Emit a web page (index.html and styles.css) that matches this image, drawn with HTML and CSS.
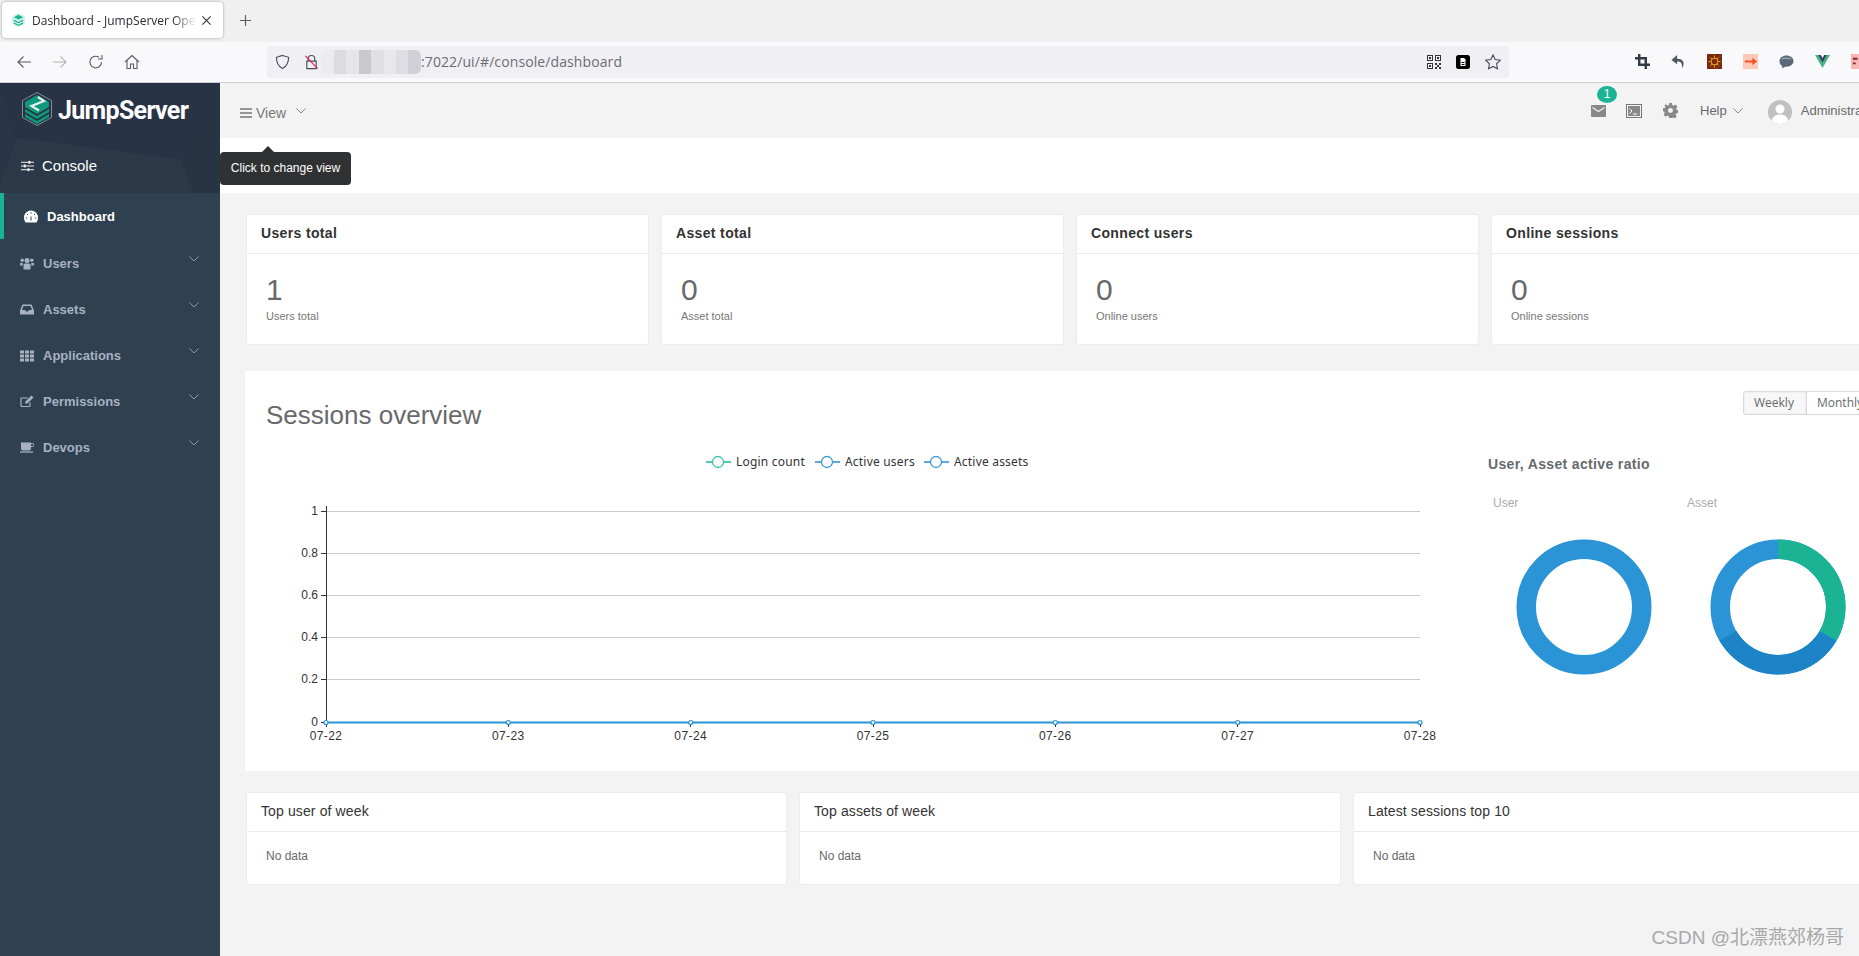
FILE: index.html
```html
<!DOCTYPE html>
<html lang="en">
<head>
<meta charset="utf-8">
<title>Dashboard - JumpServer</title>
<link rel="stylesheet" href="styles.css">
</head>
<body>
<header class="browser">
  <div class="tabstrip">
    <div class="tab">
      <svg class="favicon" viewBox="0 0 16 16"><path d="M8 0.500 15 4v8l-7 3.500L1 12V4z" fill="#d5f2ea"/><path d="M8 2.500 13 5 8 7.500 3 5z" fill="#1ab394"/><path d="M3 7.500 8 10l5-2.500v1.500L8 11.500 3 9z" fill="#1ab394"/><path d="M3 10.500 8 13l5-2.500V12L8 14.500 3 12z" fill="#1ab394"/></svg>
      <span class="tab-title">Dashboard - JumpServer Open Source</span>
      <svg class="tab-close" viewBox="0 0 12 12"><path d="M1.500 1.500l9 9M10.500 1.500l-9 9" stroke="#2b2a33" stroke-width="1.100" fill="none"/></svg>
    </div>
    <svg class="tab-new" viewBox="0 0 14 14"><path d="M7 1v12M1 7h12" stroke="#5b5b66" stroke-width="1.200" fill="none"/></svg>
  </div>
  <div class="toolbar">
    <svg class="tool" viewBox="0 0 16 16"><path d="M15 8H2M7.500 2.500 2 8l5.500 5.500" stroke="#5b5b66" stroke-width="1.100" fill="none"/></svg>
    <svg class="tool" viewBox="0 0 16 16"><path d="M1 8h13M8.500 2.500 14 8l-5.500 5.500" stroke="#b4b4ba" stroke-width="1.100" fill="none"/></svg>
    <svg class="tool" viewBox="0 0 16 16"><path d="M13.500 8A5.800 5.800 0 1 1 11 3.300M14 1v4h-4" stroke="#5b5b66" stroke-width="1.100" fill="none"/></svg>
    <svg class="tool" viewBox="0 0 16 16"><path d="M1 8 8 1.500 15 8M3 6.500V14.500H6.500V10h3v4.500H13V6.500" stroke="#5b5b66" stroke-width="1.100" fill="none"/></svg>
    <div class="urlbar">
      <svg class="url-icon" viewBox="0 0 16 16"><path d="M8 1 14.500 3c0 6-1.500 9.500-6.500 12C3 12.500 1.500 9 1.500 3z" stroke="#4a4a55" stroke-width="1.200" fill="none"/></svg>
      <svg class="url-icon lock" viewBox="0 0 16 16"><path d="M4.500 7V4.500a3.500 3.500 0 0 1 7 0V7M3 7h10v8H3z" stroke="#4a4a55" stroke-width="1.200" fill="none"/><path d="M1.500 1.500 14.500 15" stroke="#e22850" stroke-width="1.300"/></svg>
      <span class="url-blur"></span>
      <span class="url-text">:7022/ui/#/console/dashboard</span>
      <span class="url-end">
        <svg class="url-act" viewBox="0 0 14 14"><path d="M0 0h6v6H0zM1 1v4h4V1zM8 0h6v6H8zM9 1v4h4V1zM0 8h6v6H0zM1 9v4h4V9zM2 2h2v2H2zM10 2h2v2h-2zM2 10h2v2H2zM8 8h2v2H8zM12 8h2v2h-2zM10 10h2v2h-2zM8 12h2v2H8zM12 12h2v2h-2z" fill="#333" fill-rule="evenodd"/></svg>
        <svg class="url-act" viewBox="0 0 14 14"><rect width="14" height="14" rx="2.500" fill="#000"/><path d="M4.500 3h3.500l1.500 1.500V11h-5z" fill="#fff"/><path d="M5.500 7.500h3M5.500 9.500h3" stroke="#000"/></svg>
        <svg class="url-act star" viewBox="0 0 16 16"><path d="M8 1l2.200 4.600 5 .7-3.600 3.500.9 5L8 12.400 3.500 14.800l.9-5L.8 6.300l5-.7z" stroke="#4a4a55" stroke-width="1.100" fill="none"/></svg>
      </span>
    </div>
    <div class="extensions">
      <svg class="ext" viewBox="0 0 16 16"><path d="M4.500 0v11.500H16M0 4.500h11.500V16" stroke="#333c44" stroke-width="2.600" fill="none"/></svg>
      <svg class="ext" viewBox="0 0 16 16"><path d="M6.500 1 .5 6.500 6.500 11V8c3.500 0 6 1 5 7 3-3 3.500-10-5-10z" fill="#4f5660"/></svg>
      <svg class="ext" viewBox="0 0 16 16"><rect width="16" height="16" fill="#7a2a0e"/><circle cx="8" cy="8" r="3.500" fill="none" stroke="#e8a020" stroke-width="1.200"/><path d="M8 1.500v2.500M8 12v2.500M1.500 8H4M12 8h2.500M3.500 3.500l1.800 1.800M10.700 10.700l1.800 1.800M12.500 3.500l-1.800 1.800M5.300 10.700l-1.800 1.800" stroke="#e8a020"/></svg>
      <svg class="ext" viewBox="0 0 16 16"><rect width="16" height="16" fill="#ffc9ba"/><path d="M2 7h8V4l5 4-5 4V9H2z" fill="#f5501e"/></svg>
      <svg class="ext" viewBox="0 0 16 16"><path d="M8 1.500c4 0 7.500 2.500 7.500 6S12 13.500 8 13.500H6.500L3.500 15.500V13C1.500 12 .5 10 .5 7.500c0-3.500 3.500-6 7.500-6z" fill="#5b6877"/><path d="M3 5.500c1.500-1.500 8-1.500 10 0" stroke="#fff" stroke-width=".6" fill="none"/></svg>
      <svg class="ext" viewBox="0 0 16 16"><path d="M0 1h3.200L8 9.500 12.800 1H16L8 15z" fill="#41b883"/><path d="M3.200 1h3L8 4.200 9.800 1h3L8 9.500z" fill="#35495e"/></svg>
      <svg class="ext" viewBox="0 0 16 16"><rect width="16" height="16" fill="#f9b6b6"/><path d="M2 5h5M9 5h5M2 10h3" stroke="#7a2a2a" stroke-width="2"/></svg>
    </div>
  </div>
</header>

<div class="app">
  <aside class="sidebar">
    <div class="side-head">
      <svg class="side-poly" viewBox="0 0 220 110" preserveAspectRatio="none">
        <path d="M0 0h220v110H0z" fill="#293546"/>
        <path d="M17 55 78 66 180 76 220 28V0H0V10z" fill="#283445"/>
        <path d="M17 55 0 100v10h194L180 76z" fill="#2b3949"/>
        <path d="M180 76 194 110h26V28z" fill="#273444"/>
      </svg>
      <div class="brand">
        <svg class="logo" viewBox="0 0 30 34">
          <path d="M15 .5 29.500 8.500V25.500L15 33.500 .5 25.500V8.500z" fill="none" stroke="#8a98a5" stroke-width=".9"/>
          <path d="M15 3 27 10v5L15 22 3 15V10z" fill="#0f9a7d"/>
          <path d="M16 5 22 9 9.500 14 17 18.500" fill="none" stroke="#e6eeee" stroke-width="2.200"/>
          <path d="M3 17 15 24 27 17v3L15 27 3 20z" fill="#0f9a7d"/>
          <path d="M3 22 15 29 27 22v3L15 32 3 25z" fill="#0f9a7d"/>
        </svg>
        <span class="brand-name">JumpServer</span>
      </div>
      <div class="console">
        <svg class="console-icon" viewBox="0 0 14 12"><path d="M0 2h14M0 6h14M0 10h14" stroke="#fff" stroke-width="1"/><rect x="8" y=".5" width="2" height="3" fill="#fff"/><rect x="3" y="4.500" width="2" height="3" fill="#fff"/><rect x="7" y="8.500" width="2" height="3" fill="#fff"/></svg>
        <span>Console</span>
      </div>
    </div>
    <nav class="menu">
      <a class="item active">
        <svg class="mi" viewBox="0 0 14 12"><path d="M7 0a7 7 0 0 0-7 7c0 2 .6 3.500 1.500 5h11c.9-1.500 1.500-3 1.500-5a7 7 0 0 0-7-7z" fill="#fff"/><path d="M7 10V6M3 3.500l1 1M11 3.500l-1 1M1.800 7.500h1.400M10.800 7.500h1.400M7 1.800v1.400" stroke="#2f4050" stroke-width="1"/></svg>
        <span>Dashboard</span>
      </a>
      <a class="item">
        <svg class="mi" viewBox="0 0 14 12"><circle cx="7" cy="3" r="2.500" fill="#a7b1c2"/><circle cx="2.200" cy="2.800" r="1.700" fill="#a7b1c2"/><circle cx="11.800" cy="2.800" r="1.700" fill="#a7b1c2"/><path d="M3.500 12V7.500q0-1.500 1.500-1.500h4q1.500 0 1.500 1.500V12zM0 8V5.500h2.800V8zM11.200 5.500H14V8h-2.800z" fill="#a7b1c2"/></svg>
        <span>Users</span>
        <svg class="chev" viewBox="0 0 10 6"><path d="M.5.500 5 5 9.500.5" stroke="#8d98a8" fill="none"/></svg>
      </a>
      <a class="item">
        <svg class="mi" viewBox="0 0 14 12"><path d="M2.500 1h9L14 7v4H0V7zM3.500 2.500 2 6.500h3l1 1.500h2l1-1.500h3l-1.500-4z" fill="#a7b1c2" fill-rule="evenodd"/></svg>
        <span>Assets</span>
        <svg class="chev" viewBox="0 0 10 6"><path d="M.5.500 5 5 9.500.5" stroke="#8d98a8" fill="none"/></svg>
      </a>
      <a class="item">
        <svg class="mi" viewBox="0 0 14 12"><path d="M0 1h4v3H0zM5 1h4v3H5zM10 1h4v3h-4zM0 5h4v3H0zM5 5h4v3H5zM10 5h4v3h-4zM0 9h4v3H0zM5 9h4v3H5zM10 9h4v3h-4z" fill="#a7b1c2"/></svg>
        <span>Applications</span>
        <svg class="chev" viewBox="0 0 10 6"><path d="M.5.500 5 5 9.500.5" stroke="#8d98a8" fill="none"/></svg>
      </a>
      <a class="item">
        <svg class="mi" viewBox="0 0 14 12"><path d="M10 7v3q0 1-1 1H2q-1 0-1-1V3.500q0-1 1-1h6" stroke="#a7b1c2" stroke-width="1.200" fill="none"/><path d="M5 8 5.500 6 11.500 0 13.500 2 7.500 8z" fill="#a7b1c2"/></svg>
        <span>Permissions</span>
        <svg class="chev" viewBox="0 0 10 6"><path d="M.5.500 5 5 9.500.5" stroke="#8d98a8" fill="none"/></svg>
      </a>
      <a class="item">
        <svg class="mi" viewBox="0 0 14 12"><path d="M1 1h10v6q0 2-2 2H3Q1 9 1 7z" fill="#a7b1c2"/><path d="M11 2h1.500q1.500 0 1.500 1.500T12.500 5H11" stroke="#a7b1c2" fill="none"/><path d="M0 10.500h13" stroke="#a7b1c2" stroke-width="1.300"/></svg>
        <span>Devops</span>
        <svg class="chev" viewBox="0 0 10 6"><path d="M.5.500 5 5 9.500.5" stroke="#8d98a8" fill="none"/></svg>
      </a>
    </nav>
  </aside>

  <main class="main">
    <div class="topnav">
      <div class="view">
        <svg class="burger" viewBox="0 0 12 10"><path d="M0 1h12M0 5h12M0 9h12" stroke="#777" stroke-width="1.300"/></svg>
        <span>View</span>
        <svg class="view-chev" viewBox="0 0 10 6"><path d="M.5.500 5 5 9.500.5" stroke="#888" fill="none"/></svg>
      </div>
      <div class="tools">
        <span class="mail">
          <svg class="nav-icon" viewBox="0 0 15 12"><rect width="15" height="12" rx="1" fill="#888"/><path d="M1.500 2.500 7.500 6.500 13.500 2.500" stroke="#eee" stroke-width="1.300" fill="none"/></svg>
          <span class="badge">1</span>
        </span>
        <svg class="nav-icon term" viewBox="0 0 16 14"><rect x=".5" y=".5" width="15" height="13" fill="none" stroke="#777"/><rect x="2" y="2" width="12" height="10" fill="#888"/><path d="M3.500 4.500 6 7 3.500 9.500M7 10h4" stroke="#fff" fill="none"/></svg>
        <svg class="nav-icon gear" viewBox="0 0 16 16"><path d="M6.500 0h3l.4 2.200 1.500.7L13.400 1.700l2 2.300-1.400 1.800.5 1.500 1.500.4v3l-2 .4-.6 1.500 1.200 1.800-2.200 2.200-1.800-1.200-1.500.6L9.500 16h-3l-.4-2-1.500-.6L2.800 14.600.6 12.400l1.200-1.800-.6-1.500-1.200-.4v-3l2-.4.6-1.500L1.400 2 3.600 1.700l1.800 1.200 1-.7z" fill="#888"/><circle cx="8" cy="8" r="2.600" fill="#f3f3f4"/></svg>
        <span class="help">Help</span>
        <svg class="help-chev" viewBox="0 0 10 6"><path d="M.5.500 5 5 9.500.5" stroke="#888" fill="none"/></svg>
        <svg class="avatar" viewBox="0 0 24 24"><circle cx="12" cy="12" r="12" fill="#c0c0c0"/><circle cx="12" cy="9" r="4.500" fill="#fff"/><path d="M3.500 20.500c1-4 4.500-6 8.500-6s7.500 2 8.500 6a12 12 0 0 1-17 0z" fill="#fff"/></svg>
        <span class="user">Administrator</span>
      </div>
    </div>
    <div class="band"></div>
    <div class="tooltip"><span>Click to change view</span></div>

    <div class="content">
      <section class="stats">
        <article class="card">
          <h5 class="card-title strong">Users total</h5>
          <div class="stat-body"><p class="num">1</p><small class="sub">Users total</small></div>
        </article>
        <article class="card">
          <h5 class="card-title strong">Asset total</h5>
          <div class="stat-body"><p class="num">0</p><small class="sub">Asset total</small></div>
        </article>
        <article class="card">
          <h5 class="card-title strong">Connect users</h5>
          <div class="stat-body"><p class="num">0</p><small class="sub">Online users</small></div>
        </article>
        <article class="card">
          <h5 class="card-title strong">Online sessions</h5>
          <div class="stat-body"><p class="num">0</p><small class="sub">Online sessions</small></div>
        </article>
      </section>

      <section class="panel">
        <div class="panel-head">
          <h2 class="panel-title">Sessions overview</h2>
          <div class="btn-group"><span class="btn on">Weekly</span><span class="btn">Monthly</span></div>
        </div>
        <div class="panel-body">
          <svg class="chart" viewBox="0 0 1190 320">
            <g class="legend">
              <path d="M456 22h25" stroke="#4fc9b0" stroke-width="2"/><circle cx="468" cy="22" r="5.500" fill="#fff" stroke="#3cc4a8" stroke-width="1.300"/>
              <text x="486" y="26">Login count</text>
              <path d="M565 22h25" stroke="#5aa9e0" stroke-width="2"/><circle cx="577" cy="22" r="5.500" fill="#fff" stroke="#3e9bdc" stroke-width="1.300"/>
              <text x="595" y="26">Active users</text>
              <path d="M674 22h25" stroke="#5aa9e0" stroke-width="2"/><circle cx="686" cy="22" r="5.500" fill="#fff" stroke="#3e9bdc" stroke-width="1.300"/>
              <text x="704" y="26">Active assets</text>
            </g>
            <g stroke="#ccc" stroke-width="1">
              <path d="M76 71.500H1170M76 113.500H1170M76 155.500H1170M76 197.500H1170M76 239.500H1170"/>
            </g>
            <path d="M76.500 66V287M71 71.500h5M71 113.500h5M71 155.500h5M71 197.500h5M71 239.500h5M71 282.500h5M258.500 282v5M440.500 282v5M623.500 282v5M805.500 282v5M987.500 282v5M1170.500 282v5" stroke="#333" stroke-width="1" fill="none"/>
            <g class="ylabels">
              <text x="68" y="75">1</text><text x="68" y="117">0.8</text><text x="68" y="159">0.6</text><text x="68" y="201">0.4</text><text x="68" y="243">0.2</text><text x="68" y="286">0</text>
            </g>
            <path d="M76 282.500H1170" stroke="#2a94d6" stroke-width="2"/>
            <g fill="#fff" stroke="#2a94d6" stroke-width="1.200">
              <circle cx="76" cy="282.500" r="2"/><circle cx="258.300" cy="282.500" r="2"/><circle cx="440.700" cy="282.500" r="2"/><circle cx="623" cy="282.500" r="2"/><circle cx="805.300" cy="282.500" r="2"/><circle cx="987.700" cy="282.500" r="2"/><circle cx="1170" cy="282.500" r="2"/>
            </g>
            <g class="xlabels">
              <text x="76" y="300">07-22</text><text x="258.300" y="300">07-23</text><text x="440.700" y="300">07-24</text><text x="623" y="300">07-25</text><text x="805.300" y="300">07-26</text><text x="987.700" y="300">07-27</text><text x="1170" y="300">07-28</text>
            </g>
          </svg>
          <div class="ratio">
            <h4 class="ratio-title">User, Asset active ratio</h4>
            <div class="donuts">
              <div class="donut">
                <p class="donut-label">User</p>
                <svg class="ring" viewBox="0 0 192 140"><circle cx="96" cy="70" r="57.750" fill="none" stroke="#2a94d6" stroke-width="19.500"/></svg>
              </div>
              <div class="donut">
                <p class="donut-label">Asset</p>
                <svg class="ring" viewBox="0 0 192 140">
                  <g fill="none" stroke-width="19.500" transform="rotate(-90 96 70)">
                    <circle cx="96" cy="70" r="57.750" stroke="#2a94d6" pathLength="360"/>
                    <circle cx="96" cy="70" r="57.750" stroke="#1c84c6" pathLength="360" stroke-dasharray="120 360" stroke-dashoffset="-120"/>
                    <circle cx="96" cy="70" r="57.750" stroke="#1ab394" pathLength="360" stroke-dasharray="120 360"/>
                  </g>
                </svg>
              </div>
            </div>
          </div>
        </div>
      </section>

      <section class="tops">
        <article class="card">
          <h5 class="card-title">Top user of week</h5>
          <p class="nodata">No data</p>
        </article>
        <article class="card">
          <h5 class="card-title">Top assets of week</h5>
          <p class="nodata">No data</p>
        </article>
        <article class="card">
          <h5 class="card-title">Latest sessions top 10</h5>
          <p class="nodata">No data</p>
        </article>
      </section>
    </div>
  </main>
</div>
<div class="watermark">CSDN @北漂燕郊杨哥</div>
</body>
</html>
```
FILE: styles.css
```css
* { box-sizing: border-box; }
html, body { margin: 0; padding: 0; }
body {
  width: 1859px;
  height: 956px;
  overflow: hidden;
  position: relative;
  background: #f3f3f4;
  font-family: "Liberation Sans", Arial, sans-serif;
  color: #676a6c;
}
h2, h4, h5, p { margin: 0; }

/* browser chrome */
.browser { height: 83px; }
.tabstrip {
  height: 42px;
  background: #f0f0f0;
  display: flex;
  align-items: flex-start;
  padding: 2px 0 0 2px;
}
.tab {
  width: 221px;
  height: 36px;
  background: #fff;
  border-radius: 4px;
  box-shadow: 0 0 3px rgba(0,0,0,.35);
  display: flex;
  align-items: center;
  padding-left: 9px;
}
.favicon { width: 15px; height: 16px; flex: none; }
.tab-title {
  width: 168px;
  margin-left: 6px;
  font: 12px "Open Sans", sans-serif;
  color: #2b2a33;
  white-space: nowrap;
  overflow: hidden;
  flex: none;
  -webkit-mask-image: linear-gradient(to right, #000 84%, transparent 98%);
  mask-image: linear-gradient(to right, #000 84%, transparent 98%);
}
.tab-close { width: 11px; height: 11px; flex: none; margin-left: 1px; }
.tab-new { width: 13px; height: 13px; margin: 12px 0 0 16px; flex: none; }
.toolbar {
  height: 41px;
  background: #f9f9fb;
  border-bottom: 1px solid #cfcfd8;
  display: flex;
  align-items: center;
  padding: 0 0 1px 16px;
  gap: 20px;
}
.tool { width: 16px; height: 16px; flex: none; }
.urlbar {
  width: 1242px;
  height: 32px;
  margin-left: 107px;
  background: #f0f0f4;
  border-radius: 4px;
  display: flex;
  align-items: center;
  padding-left: 8px;
  flex: none;
}
.url-icon { width: 15px; height: 16px; flex: none; }
.lock { margin-left: 14px; }
.url-blur {
  width: 100px;
  height: 24px;
  margin-left: 2px;
  flex: none;
  background: linear-gradient(to right, #ececf0 0 13%, #dcdce0 13% 25%, #e6e6ea 25% 38%, #c9c9cd 38% 50%, #e0e0e4 50% 63%, #e8e8ec 63% 75%, #dedee2 75% 87%, #d0d0d8 87% 100%);
  border-radius: 6px;
}
.url-text {
  font: 14px "Open Sans", sans-serif;
  letter-spacing: .1px;
  color: #6c6c74;
  white-space: nowrap;
}
.url-end { margin-left: auto; display: flex; align-items: center; padding-right: 8px; gap: 15px; }
.url-act { width: 14px; height: 14px; flex: none; }
.star { width: 16px; height: 16px; }
.extensions { display: flex; align-items: center; gap: 21px; margin-left: 106px; flex: none; }
.ext { width: 15px; height: 15px; flex: none; }

/* app shell */
.app { display: flex; height: 873px; }
.sidebar { width: 220px; flex: none; background: #2f4050; }
.side-head { height: 110px; position: relative; overflow: hidden; }
.side-poly { position: absolute; inset: 0; width: 100%; height: 100%; }
.brand { position: relative; display: flex; align-items: center; padding: 0 0 3px 22px; height: 55px; }
.logo { width: 30px; height: 34px; flex: none; }
.brand-name {
  margin: 3px 0 0 6px;
  font: 700 25px Roboto, sans-serif;
  color: #fff;
  letter-spacing: -.7px;
  white-space: nowrap;
}
.console {
  position: relative;
  display: flex;
  align-items: center;
  height: 55px;
  padding: 0 0 0 21px;
  font-size: 15px;
  color: #fff;
}
.console-icon { width: 13px; height: 12px; margin-right: 8px; }
.menu { display: flex; flex-direction: column; }
.item {
  height: 46px;
  display: flex;
  align-items: center;
  padding: 2px 21px 0 20px;
  font-size: 13px;
  font-weight: 700;
  color: #a7b1c2;
}
.item.active {
  background: #2f4050;
  border-left: 4px solid #1ab394;
  padding: 1px 21px 0 20px;
  color: #fff;
}
.mi { width: 14px; height: 13px; flex: none; margin-right: 9px; }
.chev { width: 10px; height: 6px; margin-left: auto; margin-top: -8px; flex: none; }

/* main */
.main { flex: 1; min-width: 0; position: relative; overflow: hidden; }
.topnav {
  height: 55px;
  display: flex;
  align-items: center;
  justify-content: space-between;
  padding: 0 0 0 20px;
}
.view { display: flex; align-items: center; font-size: 14px; color: #777; padding-top: 4px; }
.burger { width: 12px; height: 10px; margin-right: 4px; }
.view-chev { width: 10px; height: 6px; margin: -4px 0 0 10px; }
.tools { display: flex; align-items: center; flex: none; width: 268px; }
.mail { position: relative; display: flex; }
.nav-icon { width: 15px; height: 12px; flex: none; display: block; }
.term { width: 16px; height: 14px; margin-left: 20px; }
.gear { width: 15px; height: 15px; margin-left: 21px; }
.badge {
  position: absolute;
  left: 6px;
  top: -19px;
  width: 20px;
  height: 17px;
  border-radius: 50%;
  background: #1ab394;
  color: #fff;
  font-size: 12px;
  line-height: 17px;
  text-align: center;
}
.help { font-size: 13px; margin-left: 22px; }
.help-chev { width: 10px; height: 6px; margin-left: 6px; flex: none; }
.avatar { width: 24px; height: 24px; margin: 2px 0 0 25px; flex: none; }
.user { font-size: 13px; margin-left: 9px; white-space: nowrap; }
.band { height: 55px; background: #fff; }
.tooltip {
  position: absolute;
  left: 0;
  top: 69px;
  width: 131px;
  height: 33px;
  padding-bottom: 2px;
  background: #303133;
  border-radius: 4px;
  color: #fff;
  font-size: 12px;
  display: flex;
  align-items: center;
  justify-content: center;
}
.tooltip::before {
  content: "";
  position: absolute;
  left: 42px;
  top: -6px;
  border: 6px solid transparent;
  border-top: 0;
  border-bottom-color: #303133;
}

/* content */
.content { padding: 21px 0 0 26px; width: 1690px; }
.stats { display: grid; grid-template-columns: repeat(4, 403px); gap: 12px; }
.card { background: #fff; border: 1px solid #ececf0; border-radius: 3px; }
.stats .card { height: 131px; }
.card-title {
  height: 39px;
  padding-left: 14px;
  border-bottom: 1px solid #e9e9f0;
  font-size: 14px;
  font-weight: 400;
  line-height: 37px;
  letter-spacing: .12px;
  color: #333;
}
.card-title.strong { font-weight: 700; letter-spacing: .35px; }
.stat-body { padding: 19px 0 0 19px; }
.num { font-size: 30px; line-height: 34px; color: #676a6c; }
.sub { display: block; font-size: 11px; line-height: 12px; margin-top: 3px; color: #777; }

.panel { margin: 26px 0 0 -1px; height: 400px; width: 1656px; background: #fff; }
.panel-head { height: 69px; display: flex; justify-content: space-between; align-items: flex-start; padding: 20px 24px 0 21px; }
.panel-title { font-size: 26px; font-weight: 400; line-height: 30px; margin-top: 9px; color: #676a6c; }
.btn-group { display: flex; width: 134px; height: 24px; flex: none; border: 1px solid #d8d8de; border-radius: 3px; }
.btn { font: 12px "Open Sans", sans-serif; line-height: 22px; padding: 0 10px; color: #676a6c; white-space: nowrap; }
.btn.on { background: #f7f7f7; border-right: 1px solid #d8d8de; box-shadow: inset 0 0 2px rgba(0,0,0,.12); width: 63px; }
.panel-body { display: flex; padding-left: 5px; }
.chart { width: 1190px; height: 320px; flex: none; }
.legend text { font: 12px "Noto Sans", sans-serif; fill: #333; letter-spacing: .2px; }
.ylabels text { font-size: 12px; fill: #333; text-anchor: end; }
.xlabels text { font-size: 12px; fill: #333; text-anchor: middle; letter-spacing: .4px; }
.ratio { padding: 15px 0 0 48px; flex: none; }
.ratio-title { font-size: 14px; line-height: 18px; font-weight: 700; letter-spacing: .35px; color: #676a6c; white-space: nowrap; }
.donuts { display: flex; margin-top: 23px; }
.donut { width: 194px; flex: none; }
.donut-label { font-size: 12px; line-height: 14px; padding-left: 5px; color: #aaa; }
.ring { display: block; width: 192px; height: 140px; margin-top: 27px; }

.tops { display: grid; grid-template-columns: 541px 542px 541px; gap: 12px; margin-top: 21px; }
.tops .card { height: 93px; }
.nodata { padding: 17px 0 0 19px; font-size: 12px; line-height: 14px; color: #676a6c; }

.watermark {
  position: absolute;
  right: 15px;
  top: 922px;
  font: 19px "Liberation Sans", "Noto Sans CJK SC", sans-serif;
  color: #a8a8a8;
  white-space: nowrap;
}
```
